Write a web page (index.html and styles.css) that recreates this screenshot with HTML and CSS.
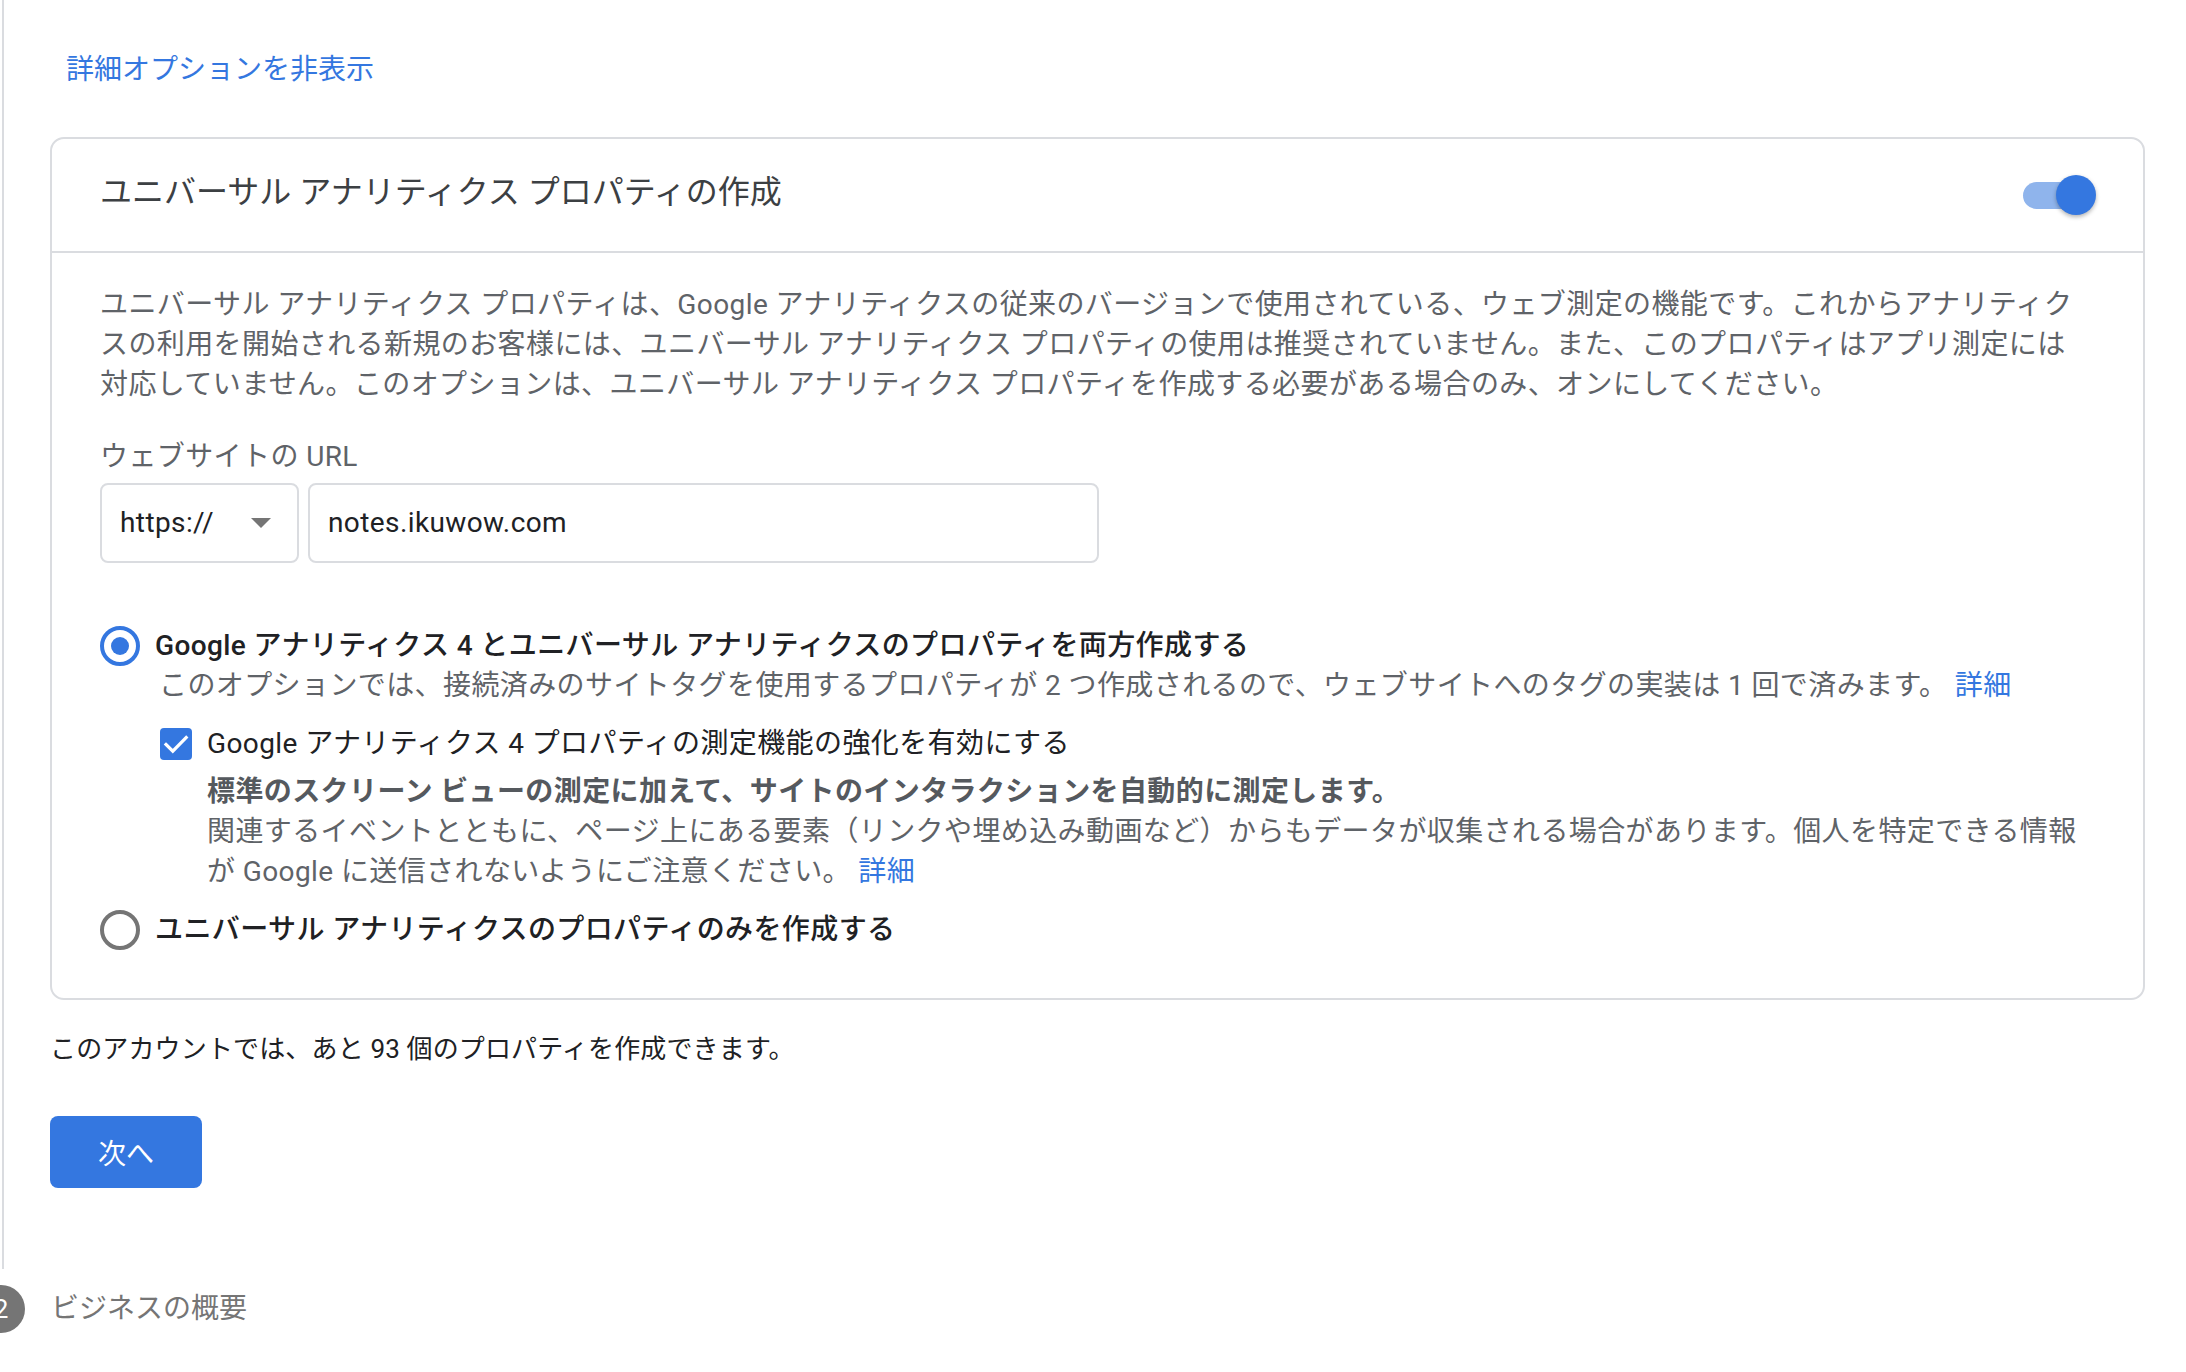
FILE: index.html
```html
<!DOCTYPE html>
<html lang="ja">
<head>
<meta charset="utf-8">
<title>プロパティの設定</title>
<link rel="stylesheet" href="styles.css">
</head>
<body>
<div class="stepper">
  <section class="step-current">
    <a class="toggle-link" href="#">詳細オプションを非表示</a>
    <div class="card">
      <div class="card-header">
        <h2 class="card-title">ユニバーサル アナリティクス プロパティの作成</h2>
        <div class="switch"><span class="switch-track"></span><span class="switch-thumb"></span></div>
      </div>
      <div class="card-body">
        <p class="desc">ユニバーサル アナリティクス プロパティは、Google アナリティクスの従来のバージョンで使用されている、ウェブ測定の機能です。これからアナリティク<br>スの利用を開始される新規のお客様には、ユニバーサル アナリティクス プロパティの使用は推奨されていません。また、このプロパティはアプリ測定には<br>対応していません。このオプションは、ユニバーサル アナリティクス プロパティを作成する必要がある場合のみ、オンにしてください。</p>
        <div class="field-label">ウェブサイトの URL</div>
        <div class="url-row">
          <div class="select"><span>https://</span><span class="caret"></span></div>
          <div class="text-input">notes.ikuwow.com</div>
        </div>
        <div class="radio-group">
          <div class="option">
            <div class="radio-row"><span class="radio checked"></span><span class="radio-label">Google アナリティクス 4 とユニバーサル アナリティクスのプロパティを両方作成する</span></div>
            <p class="option-help">このオプションでは、接続済みのサイトタグを使用するプロパティが 2 つ作成されるので、ウェブサイトへのタグの実装は 1 回で済みます。 <a class="inline-link" href="#">詳細</a></p>
            <div class="check-row">
              <span class="checkbox"><svg viewBox="0 0 32 32" width="32" height="32"><path d="M6 16.5 L12.8 23.2 L26.2 9.6" fill="none" stroke="#fff" stroke-width="3.2" stroke-linecap="square"/></svg></span>
              <span class="check-label">Google アナリティクス 4 プロパティの測定機能の強化を有効にする</span>
            </div>
            <div class="check-desc">
              <p class="strong">標準のスクリーン ビューの測定に加えて、サイトのインタラクションを自動的に測定します。</p>
              <p>関連するイベントとともに、ページ上にある要素（リンクや埋め込み動画など）からもデータが収集される場合があります。個人を特定できる情報<br>が Google に送信されないようにご注意ください。 <a class="inline-link" href="#">詳細</a></p>
            </div>
          </div>
          <div class="radio-row second"><span class="radio"></span><span class="radio-label">ユニバーサル アナリティクスのプロパティのみを作成する</span></div>
        </div>
      </div>
    </div>
    <p class="quota">このアカウントでは、あと 93 個のプロパティを作成できます。</p>
    <button class="next-btn" type="button">次へ</button>
  </section>
  <div class="step-next"><span class="step-num">2</span><span class="step-name">ビジネスの概要</span></div>
</div>
</body>
</html>
```

FILE: styles.css
```css
* { box-sizing: border-box; }
html, body { margin: 0; background: #fff; }
body {
  font-family: Roboto, "Noto Sans CJK JP", sans-serif;
  font-size: 28px;
  line-height: 40px;
  color: #202124;
  overflow: hidden;
}

.step-current {
  margin-left: 2px;
  border-left: 2px solid #dadce0;
  padding: 50px 41px 81px 46px;
}

.toggle-link {
  display: block;
  width: max-content;
  margin-left: 16px;
  color: #3477e0;
  text-decoration: none;
}

.card {
  margin-top: 47px;
  border: 2px solid #dadce0;
  border-radius: 14px;
}

.card-header {
  height: 114px;
  display: flex;
  align-items: center;
  justify-content: space-between;
  padding: 0 47px 0 48px;
  border-bottom: 2px solid #dadce0;
}

.card-title {
  margin: 0 0 6px;
  font-size: 32px;
  font-weight: 400;
  line-height: 40px;
  color: #3c4043;
}

.switch {
  display: flex;
  align-items: center;
  width: 73px;
}
.switch-track {
  width: 54px;
  height: 27px;
  border-radius: 14px;
  background: #8fb4ec;
  flex: none;
}
.switch-thumb {
  width: 40px;
  height: 40px;
  border-radius: 50%;
  background: #3477e0;
  margin-left: -21px;
  flex: none;
  box-shadow: 0 2px 4px rgba(0, 0, 0, 0.3);
}

.card-body {
  padding: 32px 41px 48px 48px;
  letter-spacing: 0.4px;
}

.desc {
  margin: 0;
  color: #5f6368;
}

.field-label {
  margin-top: 32px;
  color: #5f6368;
}

.url-row {
  display: flex;
  gap: 9px;
  margin-top: 6px;
}

.select {
  width: 199px;
  height: 80px;
  border: 2px solid #dadce0;
  border-radius: 8px;
  display: flex;
  align-items: center;
  justify-content: space-between;
  padding: 0 26px 0 18px;
  color: #202124;
}

.caret {
  width: 0;
  height: 0;
  border-left: 10px solid transparent;
  border-right: 10px solid transparent;
  border-top: 10px solid #757575;
}

.text-input {
  width: 791px;
  height: 80px;
  border: 2px solid #dadce0;
  border-radius: 8px;
  display: flex;
  align-items: center;
  padding: 0 18px;
  color: #202124;
}

.radio-group {
  margin-top: 63px;
}

.radio-row {
  display: flex;
  align-items: center;
  gap: 15px;
  height: 40px;
}
.radio-row.second {
  margin-top: 18px;
}

.radio {
  width: 40px;
  height: 40px;
  border: 4px solid #757575;
  border-radius: 50%;
  display: flex;
  align-items: center;
  justify-content: center;
  flex: none;
}
.radio.checked {
  border-color: #3477e0;
}
.radio.checked::after {
  content: "";
  width: 18px;
  height: 18px;
  border-radius: 50%;
  background: #3477e0;
}

.radio-label {
  font-weight: 500;
  color: #202124;
}

.option-help {
  margin: 0;
  padding-left: 59px;
  color: #5f6368;
}

.check-row {
  display: flex;
  align-items: center;
  gap: 15px;
  margin-top: 18px;
  padding-left: 60px;
}

.checkbox {
  width: 32px;
  height: 32px;
  border-radius: 4px;
  background: #3477e0;
  flex: none;
  display: flex;
}

.check-label {
  color: #202124;
}

.check-desc {
  margin-top: 8px;
  padding-left: 107px;
  color: #5f6368;
}
.check-desc p {
  margin: 0;
}
.check-desc .strong {
  font-weight: 700;
  color: #55595e;
}

.inline-link {
  color: #3477e0;
  text-decoration: none;
}

.quota {
  margin: 29px 0 0;
  font-size: 26px;
  letter-spacing: 0.15px;
  color: #202124;
}

.next-btn {
  display: block;
  margin-top: 47px;
  width: 152px;
  height: 72px;
  border: none;
  border-radius: 8px;
  background: #3477e0;
  color: #fff;
  font-family: inherit;
  font-size: 28px;
  padding: 0;
}

.step-next {
  display: flex;
  align-items: center;
  gap: 26px;
  margin-top: 16px;
}

.step-num {
  width: 48px;
  height: 48px;
  border-radius: 50%;
  background: #757575;
  color: #fff;
  display: flex;
  align-items: center;
  justify-content: center;
  margin-left: -23px;
  font-size: 26px;
  flex: none;
}

.step-name {
  color: #757575;
}
```
